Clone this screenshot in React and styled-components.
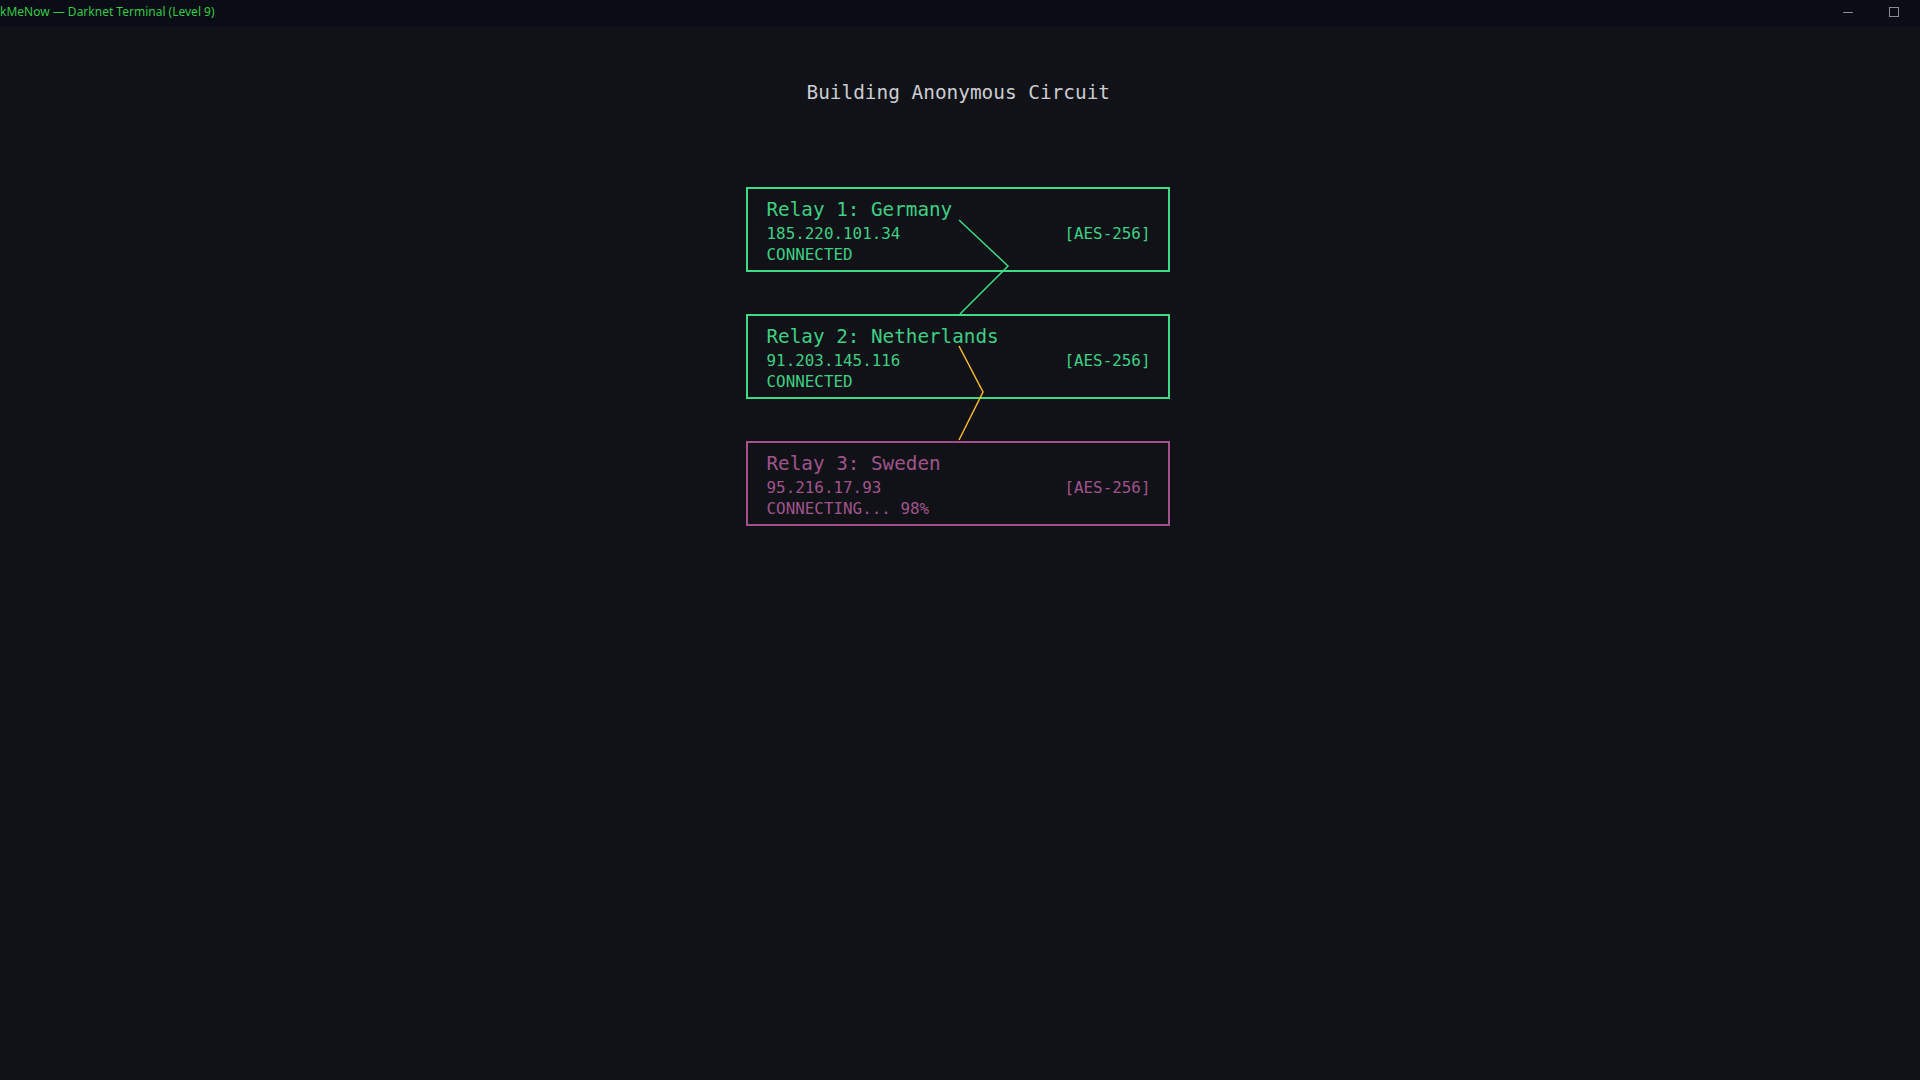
import React from "react";
import styled, { createGlobalStyle } from "styled-components";

const Global = createGlobalStyle`
  html, body { margin: 0; padding: 0; background: #111217; }
  body { width: 1920px; height: 1080px; overflow: hidden; }
  #root { height: 100%; }
`;

const Window = styled.div`
  width: 1920px;
  height: 1080px;
  display: flex;
  flex-direction: column;
  background: #111217;
`;

const TitleBar = styled.div`
  height: 27px;
  flex: none;
  background: #0a0d15;
  display: flex;
  align-items: center;
  justify-content: space-between;
`;

const WindowTitle = styled.span`
  font-family: "Noto Sans", "Open Sans", sans-serif;
  font-size: 12px;
  color: #34c845;
  white-space: nowrap;
  line-height: 1;
  margin-top: -4px;
`;

const Controls = styled.div`
  display: flex;
  align-items: center;
  height: 100%;
  margin-right: 3px;
`;

const ControlButton = styled.div`
  width: 46px;
  height: 100%;
  display: flex;
  align-items: center;
  justify-content: center;
  margin-top: -3px;
`;

const Main = styled.main`
  flex: 1;
  display: flex;
  flex-direction: column;
  align-items: center;
  padding-top: 54px;
  font-family: "DejaVu Sans Mono", "Liberation Mono", monospace;
`;

const Heading = styled.h1`
  margin: 0 0 0 -3.5px;
  font-weight: normal;
  font-size: 19.4px;
  line-height: 24px;
  color: #cbccd1;
`;

const Circuit = styled.div`
  position: relative;
  margin-top: 82px;
  margin-left: -5px;
  display: flex;
  flex-direction: column;
  gap: 42px;
`;

const Relay = styled.div`
  width: 424px;
  height: 85px;
  box-sizing: border-box;
  border: 2px solid ${(p) => p.$color};
  color: ${(p) => p.$text};
  padding: 8px 17px 0 19px;
`;

const RelayName = styled.div`
  font-size: 19.3px;
  line-height: 26px;
`;

const Row = styled.div`
  display: flex;
  justify-content: space-between;
  font-size: 15.9px;
  line-height: 21px;
`;

const Overlay = styled.svg`
  position: absolute;
  left: 0;
  top: 0;
  width: 424px;
  height: 340px;
  pointer-events: none;
  overflow: visible;
`;

const relays = [
  {
    name: "Relay 1: Germany",
    ip: "185.220.101.34",
    status: "CONNECTED",
    color: "#3ddc84",
    text: "#3ecf83",
  },
  {
    name: "Relay 2: Netherlands",
    ip: "91.203.145.116",
    status: "CONNECTED",
    color: "#3ddc84",
    text: "#3ecf83",
  },
  {
    name: "Relay 3: Sweden",
    ip: "95.216.17.93",
    status: "CONNECTING... 98%",
    color: "#a64f8f",
    text: "#a0548c",
  },
];

export default function App() {
  return (
    <>
      <Global />
      <Window>
        <TitleBar>
          <WindowTitle>kMeNow — Darknet Terminal (Level 9)</WindowTitle>
          <Controls>
            <ControlButton>
              <svg width="10" height="10" viewBox="0 0 10 10">
                <line x1="0" y1="5.5" x2="10" y2="5.5" stroke="#8a8d94" strokeWidth="1" />
              </svg>
            </ControlButton>
            <ControlButton>
              <svg width="10" height="10" viewBox="0 0 10 10">
                <rect x="0.5" y="0.5" width="9" height="9" fill="none" stroke="#8a8d94" strokeWidth="1" />
              </svg>
            </ControlButton>
          </Controls>
        </TitleBar>
        <Main>
          <Heading>Building Anonymous Circuit</Heading>
          <Circuit>
            {relays.map((r) => (
              <Relay key={r.name} $color={r.color} $text={r.text}>
                <RelayName>{r.name}</RelayName>
                <Row>
                  <span>{r.ip}</span>
                  <span>[AES-256]</span>
                </Row>
                <Row>
                  <span>{r.status}</span>
                </Row>
              </Relay>
            ))}
            <Overlay viewBox="0 0 424 340">
              <polyline
                points="213,33 262,79 214,127"
                fill="none"
                stroke="#3ddc84"
                strokeWidth="1.5"
              />
              <polyline
                points="213,159 237,205 213,253"
                fill="none"
                stroke="#f5b82e"
                strokeWidth="1.5"
              />
            </Overlay>
          </Circuit>
        </Main>
      </Window>
    </>
  );
}
